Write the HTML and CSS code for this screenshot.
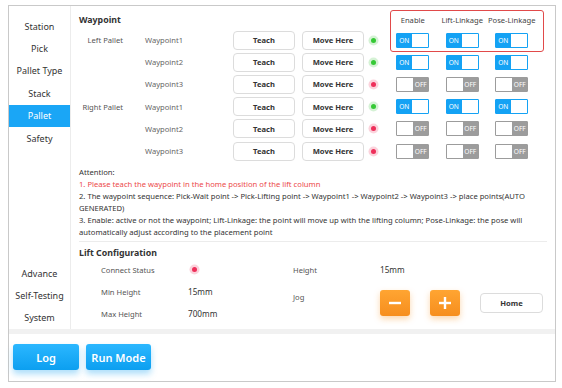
FILE: index.html
```html
<!DOCTYPE html>
<html>
<head>
<meta charset="utf-8">
<link rel="stylesheet" href="styles.css">
</head>
<body>
<div class="frame">
  <div class="top">
    <nav class="sidebar">
      <div class="nav-group">
        <div class="nav-item">Station</div>
        <div class="nav-item">Pick</div>
        <div class="nav-item">Pallet Type</div>
        <div class="nav-item">Stack</div>
        <div class="nav-item active">Pallet</div>
        <div class="nav-item">Safety</div>
      </div>
      <div class="nav-group bottom-group">
        <div class="nav-item">Advance</div>
        <div class="nav-item">Self-Testing</div>
        <div class="nav-item">System</div>
      </div>
    </nav>
    <main class="main">
      <div class="wp-grid">
        <div class="section-title">Waypoint</div>
        <div></div><div></div><div></div><div></div>
        <div class="col-head">Enable</div>
        <div class="col-head">Lift-Linkage</div>
        <div class="col-head">Pose-Linkage</div>

        <div class="pallet">Left Pallet</div>
        <div class="wp">Waypoint1</div>
        <div><button class="btn">Teach</button></div>
        <div><button class="btn">Move Here</button></div>
        <div><span class="dot green"></span></div>
        <div class="tcell"><span class="toggle on"><span class="tl">ON</span><span class="knob"></span></span></div>
        <div class="tcell"><span class="toggle on"><span class="tl">ON</span><span class="knob"></span></span></div>
        <div class="tcell"><span class="toggle on"><span class="tl">ON</span><span class="knob"></span></span></div>

        <div class="pallet"></div>
        <div class="wp">Waypoint2</div>
        <div><button class="btn">Teach</button></div>
        <div><button class="btn">Move Here</button></div>
        <div><span class="dot green"></span></div>
        <div class="tcell"><span class="toggle on"><span class="tl">ON</span><span class="knob"></span></span></div>
        <div class="tcell"><span class="toggle on"><span class="tl">ON</span><span class="knob"></span></span></div>
        <div class="tcell"><span class="toggle on"><span class="tl">ON</span><span class="knob"></span></span></div>

        <div class="pallet"></div>
        <div class="wp">Waypoint3</div>
        <div><button class="btn">Teach</button></div>
        <div><button class="btn">Move Here</button></div>
        <div><span class="dot red"></span></div>
        <div class="tcell"><span class="toggle off"><span class="knob"></span><span class="tl">OFF</span></span></div>
        <div class="tcell"><span class="toggle off"><span class="knob"></span><span class="tl">OFF</span></span></div>
        <div class="tcell"><span class="toggle off"><span class="knob"></span><span class="tl">OFF</span></span></div>

        <div class="pallet">Right Pallet</div>
        <div class="wp">Waypoint1</div>
        <div><button class="btn">Teach</button></div>
        <div><button class="btn">Move Here</button></div>
        <div><span class="dot green"></span></div>
        <div class="tcell"><span class="toggle on"><span class="tl">ON</span><span class="knob"></span></span></div>
        <div class="tcell"><span class="toggle on"><span class="tl">ON</span><span class="knob"></span></span></div>
        <div class="tcell"><span class="toggle on"><span class="tl">ON</span><span class="knob"></span></span></div>

        <div class="pallet"></div>
        <div class="wp">Waypoint2</div>
        <div><button class="btn">Teach</button></div>
        <div><button class="btn">Move Here</button></div>
        <div><span class="dot red"></span></div>
        <div class="tcell"><span class="toggle off"><span class="knob"></span><span class="tl">OFF</span></span></div>
        <div class="tcell"><span class="toggle off"><span class="knob"></span><span class="tl">OFF</span></span></div>
        <div class="tcell"><span class="toggle off"><span class="knob"></span><span class="tl">OFF</span></span></div>

        <div class="pallet"></div>
        <div class="wp">Waypoint3</div>
        <div><button class="btn">Teach</button></div>
        <div><button class="btn">Move Here</button></div>
        <div><span class="dot red"></span></div>
        <div class="tcell"><span class="toggle off"><span class="knob"></span><span class="tl">OFF</span></span></div>
        <div class="tcell"><span class="toggle off"><span class="knob"></span><span class="tl">OFF</span></span></div>
        <div class="tcell"><span class="toggle off"><span class="knob"></span><span class="tl">OFF</span></span></div>
      </div>
      <div class="highlight-box"></div>

      <div class="attention">
        <div>Attention:</div>
        <div class="warn">1. Please teach the waypoint in the home position of the lift column</div>
        <div>2. The waypoint sequence: Pick-Wait point -&gt; Pick-Lifting point -&gt; Waypoint1 -&gt; Waypoint2 -&gt; Waypoint3 -&gt; place points(AUTO GENERATED)</div>
        <div>3. Enable: active or not the waypoint; Lift-Linkage: the point will move up with the lifting column; Pose-Linkage: the pose will automatically adjust according to the placement point</div>
      </div>

      <div class="section-title lift-title">Lift Configuration</div>
      <div class="lift-grid">
        <div class="lbl">Connect Status</div>
        <div class="val"><span class="dot red"></span></div>
        <div class="lbl">Height</div>
        <div class="val">15mm</div>

        <div class="lbl">Min Height</div>
        <div class="val">15mm</div>
        <div class="lbl jog-lbl">Jog</div>
        <div class="jog">
          <button class="obtn" aria-label="minus"><svg width="12" height="12" viewBox="0 0 12 12"><rect x="0" y="4.8" width="12" height="2.4" fill="#fff"/></svg></button>
          <button class="obtn" aria-label="plus"><svg width="12" height="12" viewBox="0 0 12 12"><rect x="0" y="4.8" width="12" height="2.4" fill="#fff"/><rect x="4.8" y="0" width="2.4" height="12" fill="#fff"/></svg></button>
          <button class="btn home">Home</button>
        </div>

        <div class="lbl">Max Height</div>
        <div class="val">700mm</div>
      </div>
    </main>
  </div>
  <div class="band"></div>
  <div class="bottom">
    <button class="bbtn">Log</button>
    <button class="bbtn">Run Mode</button>
  </div>
</div>
</body>
</html>
```

FILE: styles.css
```css
* { box-sizing: border-box; }
html, body { margin: 0; padding: 0; background: #fff; }
body {
  width: 562px;
  height: 388px;
  font-family: "Noto Sans", "Open Sans", sans-serif;
  color: #333;
  overflow: hidden;
}
button { font-family: inherit; cursor: pointer; }

.frame {
  margin: 5px 0 0 8px;
  width: 548px;
  height: 377px;
  border: 1px solid #c9c9c9;
  display: flex;
  flex-direction: column;
}
.top {
  display: flex;
  height: 323px;
}
.sidebar {
  width: 62px;
  border-right: 1px solid #ececec;
  display: flex;
  flex-direction: column;
  justify-content: space-between;
  padding-top: 9px;
}
.nav-item {
  height: 22.4px;
  display: flex;
  align-items: center;
  justify-content: center;
  font-size: 9px;
  color: #333;
  white-space: nowrap;
}
.nav-item.active {
  background: #1aa6f6;
  color: #fff;
}

.main {
  flex: 1;
  position: relative;
  padding: 4px 8px 0 8px;
}
.section-title {
  font-size: 8.8px;
  font-weight: 700;
  color: #333;
  align-self: center;
}
.wp-grid {
  display: grid;
  grid-template-columns: 66px 88px 69px 62px 24px 49.5px 49.5px 49.5px;
  grid-template-rows: 19px repeat(6, 22.2px);
  align-items: center;
}
.col-head {
  font-size: 7.6px;
  color: #444;
  text-align: center;
  white-space: nowrap;
}
.pallet {
  font-size: 7.6px;
  color: #555;
  text-align: right;
  padding-right: 22px;
}
.wp {
  font-size: 7.6px;
  color: #666;
}
.btn {
  width: 62px;
  height: 19px;
  border: 1px solid #dcdcdc;
  border-radius: 4px;
  background: #fff;
  font-size: 7.6px;
  font-weight: 700;
  color: #333;
  padding: 0;
  display: block;
}
.dot {
  display: block;
  width: 5px;
  height: 5px;
  border-radius: 50%;
  margin-left: 7px;
}
.dot.green { background: #35c935; box-shadow: 0 0 0 2.5px #d5f2d5; }
.dot.red { background: #ee2f5a; box-shadow: 0 0 0 2.5px #fbd3dc; }
.tcell { display: flex; justify-content: center; }
.toggle {
  width: 33px;
  height: 15px;
  display: flex;
  border-radius: 1px;
  overflow: hidden;
}
.toggle .tl {
  flex: 1;
  font-size: 6.6px;
  color: #fff;
  display: flex;
  align-items: center;
  justify-content: center;
}
.toggle .knob {
  width: 16px;
  background: #fff;
}
.toggle.on { background: #14a2f4; border: 1.5px solid #14a2f4; }
.toggle.on .tl { padding-right: 1px; }
.toggle.off { background: #9c9c9c; border: 1px solid #9c9c9c; }

.highlight-box {
  position: absolute;
  left: 319px;
  top: 4px;
  width: 154px;
  height: 42px;
  border: 1.5px solid #e14a4a;
  border-radius: 3px;
}

.attention {
  margin-top: 5px;
  font-size: 7.65px;
  line-height: 11.9px;
  color: #333;
  padding-bottom: 2px;
  border-bottom: 1px solid #ececec;
  padding-right: 6px;
}
.attention .warn { color: #ec4a4a; }

.lift-title {
  margin-top: 5px;
  line-height: 12px;
}
.lift-grid {
  display: grid;
  grid-template-columns: 87px 105px 87px 1fr;
  grid-template-rows: 22px 22px 22px;
  padding-left: 22px;
  align-items: center;
  font-size: 7.6px;
}
.lbl { color: #555; }
.val { color: #333; font-size: 8.2px; }
.val .dot { margin-left: 4px; }
.jog-lbl {
  grid-row: 2 / span 2;
  grid-column: 3;
  align-self: start;
  padding-top: 11px;
}
.jog {
  grid-row: 2 / span 2;
  grid-column: 4;
  align-self: start;
  display: flex;
  align-items: center;
  gap: 20px;
  padding-top: 9px;
}
.obtn {
  width: 30px;
  height: 26px;
  border: none;
  border-radius: 3px;
  background: linear-gradient(#ffa532, #f68e1e);
  box-shadow: 0 3px 6px rgba(246, 142, 30, 0.35);
  display: flex;
  align-items: center;
  justify-content: center;
  padding: 0;
}
.btn.home { width: 63px; height: 20px; }

.band {
  height: 5px;
  background: #f1f1f1;
}
.bottom {
  display: flex;
  gap: 7px;
  padding: 10px 0 0 4px;
}
.bbtn {
  height: 26px;
  border: none;
  border-radius: 3px;
  background: linear-gradient(#2bb7ff, #0c9ff0);
  box-shadow: 0 4px 6px rgba(20, 160, 240, 0.35);
  color: #fff;
  font-size: 11px;
  font-weight: 600;
  padding: 0;
}
.bbtn:first-child { width: 66px; }
.bbtn:last-child { width: 65px; }
```
